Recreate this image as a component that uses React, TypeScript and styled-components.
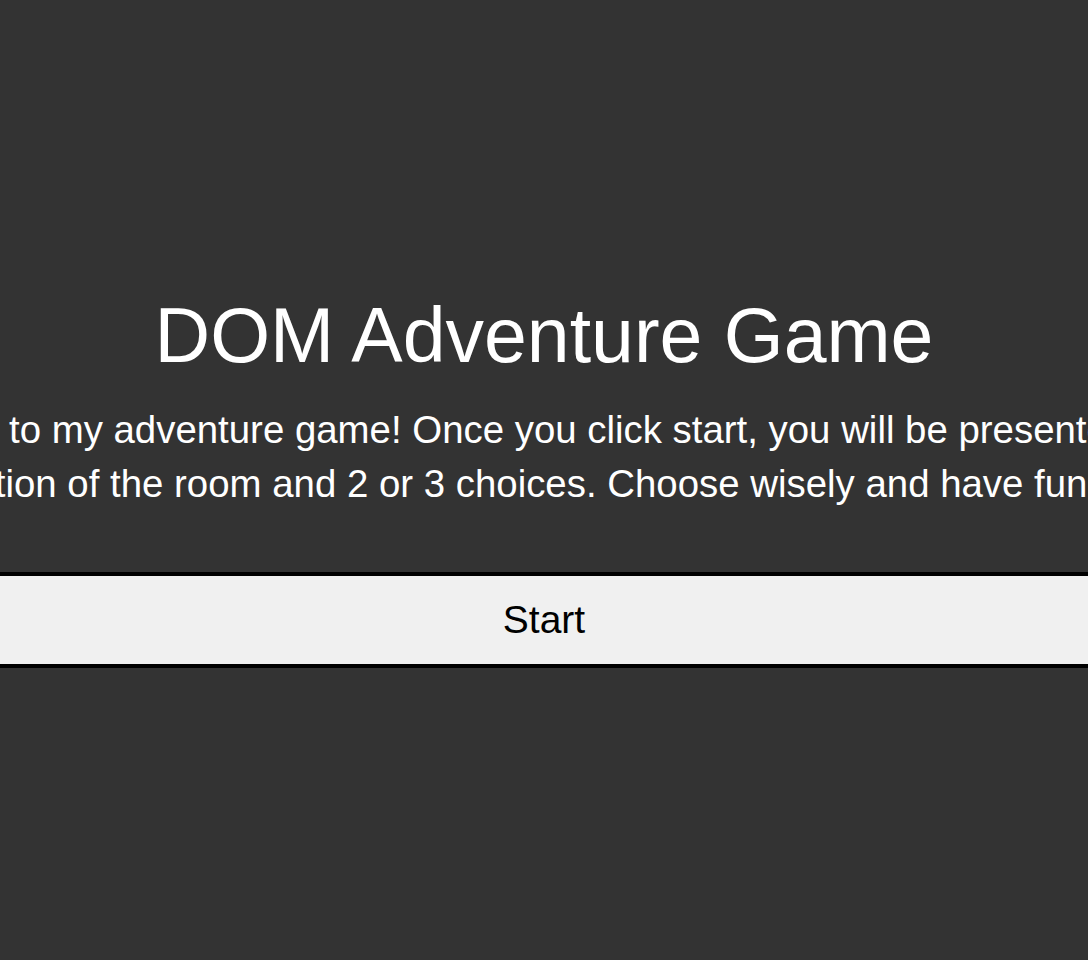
import React from 'react';
import styled, { createGlobalStyle } from 'styled-components';

const GlobalStyle = createGlobalStyle`
    html, body {
        margin: 0;
        padding: 0;
        background: #333333;
        font-family: "Liberation Sans", Helvetica, Arial, sans-serif;
    }
`
const Main = styled.main`
    display: flex;
    flex-direction: column;
    align-items: center;
    min-height: 100vh;
    padding-top: 291px;
    box-sizing: border-box;
    overflow: hidden;
`
const Title = styled.h1`
    margin: 0;
    font-size: 77px;
    line-height: 88px;
    font-weight: normal;
    color: #ffffff;
    white-space: nowrap;
`
const Intro = styled.p`
    flex-shrink: 0;
    width: 1400px;
    margin: 24px 10px 0 0;
    font-size: 38.4px;
    line-height: 54px;
    color: #ffffff;
    text-align: left;
`
const StartButton = styled.button`
    align-self: stretch;
    height: 96px;
    margin-top: 61px;
    padding: 0;
    border: none;
    border-top: 4px solid #000;
    border-bottom: 4px solid #000;
    background: #f0f0f0;
    color: #000;
    font-family: inherit;
    font-size: 39px;
    cursor: pointer;
`

export default function App() {
    return (
        <>
            <GlobalStyle />
            <Main>
                <Title>DOM Adventure Game</Title>
                <Intro>
                    Welcome to my adventure game! Once you click start, you will be presented with a description of the room and 2 or 3 choices. Choose wisely and have fun!
                </Intro>
                <StartButton type='button'>Start</StartButton>
            </Main>
        </>
    );
}
